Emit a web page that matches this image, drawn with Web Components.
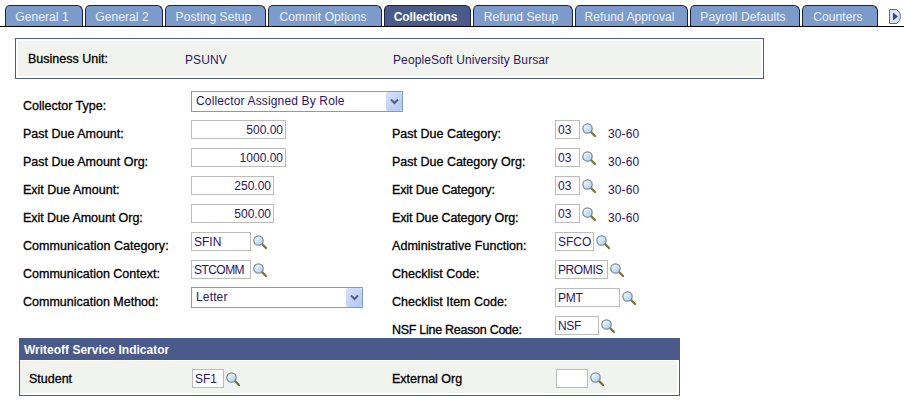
<!DOCTYPE html>
<html>
<head>
<meta charset="utf-8">
<title>Collections</title>
<style>
    html, body { margin: 0; background: #fff; }
    body { font: 12px/14px "Liberation Sans", Arial, sans-serif; color: #000; }
</style>
</head>
<body>
<x-page>
    <x-tabbar>
        <x-tab style="--w:78px">General 1</x-tab>
        <x-tab style="--w:78px">General 2</x-tab>
        <x-tab style="--w:101px">Posting Setup</x-tab>
        <x-tab style="--w:114px">Commit Options</x-tab>
        <x-tab style="--w:87px" active>Collections</x-tab>
        <x-tab style="--w:100px">Refund Setup</x-tab>
        <x-tab style="--w:113px">Refund Approval</x-tab>
        <x-tab style="--w:110px">Payroll Defaults</x-tab>
        <x-tab style="--w:76px">Counters</x-tab>
    </x-tabbar>

    <x-unit-box>
        <span slot="label">Business Unit:</span>
        <span slot="code">PSUNV</span>
        <span slot="name">PeopleSoft University Bursar</span>
    </x-unit-box>

    <x-form>
        <x-field side="left" top="8"><span slot="label">Collector Type:</span><x-select style="--w:212px">Collector Assigned By Role</x-select></x-field>
        <span></span>

        <x-field side="left"><span slot="label">Past Due Amount:</span><x-input style="--w:95px" right>500.00</x-input></x-field>
        <x-field><span slot="label">Past Due Category:</span><x-input style="--w:25px">03</x-input><x-lookup></x-lookup><x-desc>30-60</x-desc></x-field>

        <x-field side="left"><span slot="label">Past Due Amount Org:</span><x-input style="--w:95px" right>1000.00</x-input></x-field>
        <x-field><span slot="label">Past Due Category Org:</span><x-input style="--w:25px">03</x-input><x-lookup></x-lookup><x-desc>30-60</x-desc></x-field>

        <x-field side="left"><span slot="label">Exit Due Amount:</span><x-input style="--w:83px" right>250.00</x-input></x-field>
        <x-field><span slot="label" style="letter-spacing:-.12px">Exit Due Category:</span><x-input style="--w:25px">03</x-input><x-lookup></x-lookup><x-desc>30-60</x-desc></x-field>

        <x-field side="left"><span slot="label" style="letter-spacing:-.06px">Exit Due Amount Org:</span><x-input style="--w:83px" right>500.00</x-input></x-field>
        <x-field><span slot="label" style="letter-spacing:-.13px">Exit Due Category Org:</span><x-input style="--w:25px">03</x-input><x-lookup></x-lookup><x-desc>30-60</x-desc></x-field>

        <x-field side="left"><span slot="label" style="letter-spacing:.05px">Communication Category:</span><x-input style="--w:60px">SFIN</x-input><x-lookup></x-lookup></x-field>
        <x-field><span slot="label" style="letter-spacing:.05px">Administrative Function:</span><x-input style="--w:39px">SFCO</x-input><x-lookup></x-lookup></x-field>

        <x-field side="left"><span slot="label">Communication Context:</span><x-input style="--w:60px;letter-spacing:-.55px">STCOMM</x-input><x-lookup></x-lookup></x-field>
        <x-field><span slot="label">Checklist Code:</span><x-input style="--w:53px;letter-spacing:-.4px">PROMIS</x-input><x-lookup></x-lookup></x-field>

        <x-field side="left" top="8" style="margin-top:-1px"><span slot="label">Communication Method:</span><x-select style="--w:172px">Letter</x-select></x-field>
        <x-field><span slot="label">Checklist Item Code:</span><x-input style="--w:65px;letter-spacing:-.3px">PMT</x-input><x-lookup></x-lookup></x-field>

        <span></span>
        <x-field><span slot="label" style="letter-spacing:-.28px">NSF Line Reason Code:</span><x-input style="--w:44px;letter-spacing:-.3px">NSF</x-input><x-lookup></x-lookup></x-field>
    </x-form>

    <x-section heading="Writeoff Service Indicator">
        <x-field side="student" top="3"><span slot="label">Student</span><x-input style="--w:32px">SF1</x-input><x-lookup></x-lookup></x-field>
        <x-field side="org" top="3"><span slot="label">External Org</span><x-input style="--w:32px"></x-input><x-lookup></x-lookup></x-field>
    </x-section>
</x-page>

<script>
class XPage extends HTMLElement {
    constructor() {
        super();
        this.attachShadow({ mode: 'open' });
        this.shadowRoot.innerHTML = `
            <style>
                :host { display: block; width: 904px; height: 404px; overflow: hidden; padding-top: 5px; box-sizing: border-box; }
            </style>
            <slot></slot>
        `;
    }
}

class XTabbar extends HTMLElement {
    constructor() {
        super();
        this.attachShadow({ mode: 'open' });
        this.shadowRoot.innerHTML = `
            <style>
                :host { display: flex; gap: 2px; height: 21px; padding-left: 5px; border-bottom: 1px solid #000; }
                .more { margin-left: 9px; margin-top: 4px; }
            </style>
            <slot></slot>
            <svg class="more" width="12" height="15" viewBox="0 0 12 15">
                <path d="M.5.5H7.500Q11.500 2.500 11.500 7.500T7.500 14.500H.5Z" fill="#dbe4f7" stroke="#5a6a9a"/>
                <path d="M4 3.500L9 7.500L4 11.500Z" fill="#37477c"/>
            </svg>
        `;
    }
}

class XTab extends HTMLElement {
    constructor() {
        super();
        this.attachShadow({ mode: 'open' });
        this.shadowRoot.innerHTML = `
            <style>
                :host { display: block; width: var(--w); height: 21px; box-sizing: border-box; border: 1px solid #1c2536; border-bottom: 0; border-radius: 5px 6px 0 0; padding-right: 4px;
                    background: #7c9bcb; color: #edf2fb; text-align: center; line-height: 23px; letter-spacing: .08px; white-space: nowrap; }
                :host([active]) { background: #4a5a8a; color: #fff; font-weight: bold; letter-spacing: -.1px; }
            </style>
            <slot></slot>
        `;
    }
}

class XUnitBox extends HTMLElement {
    constructor() {
        super();
        this.attachShadow({ mode: 'open' });
        this.shadowRoot.innerHTML = `
            <style>
                :host { display: block; width: 749px; height: 41px; margin: 11px 0 0 15px; box-sizing: border-box; border: 1px solid #4a5a8a; padding: 2px; background: #fff; }
                .fill { display: grid; grid-template-columns: 157px 208px 1fr; height: 100%; padding: 11px 0 0 10px; box-sizing: border-box; background: #f1f4ee; }
                .label { font-size: 12.5px; -webkit-text-stroke: .3px #000; }
                .value { color: #2c1466; padding-top: 1px; letter-spacing: .1px; }
            </style>
            <div class="fill">
                <div class="label"><slot name="label"></slot></div>
                <div class="value"><slot name="code"></slot></div>
                <div class="value"><slot name="name"></slot></div>
            </div>
        `;
    }
}

class XForm extends HTMLElement {
    constructor() {
        super();
        this.attachShadow({ mode: 'open' });
        this.shadowRoot.innerHTML = `
            <style>
                :host { display: grid; grid-template-columns: 369px 1fr; grid-template-rows: 29px repeat(7, 28px) 22px; margin-top: 12px; padding-left: 23px; }
            </style>
            <slot></slot>
        `;
    }
}

class XField extends HTMLElement {
    constructor() {
        super();
        this.attachShadow({ mode: 'open' });
        this.shadowRoot.innerHTML = `
            <style>
                :host { display: grid; grid-template-columns: 163px auto; align-items: start; justify-content: start; }
                :host([side="left"]) { grid-template-columns: 168px auto; }
                :host([side="org"]) { grid-template-columns: 164px auto; }
                .label { padding-top: var(--label-top, 7px); font-size: 12.5px; -webkit-text-stroke: .3px #000; white-space: nowrap; }
                .control { display: flex; align-items: flex-start; }
            </style>
            <div class="label"><slot name="label"></slot></div>
            <div class="control"><slot></slot></div>
        `;
    }
    connectedCallback() {
        if (this.hasAttribute('top')) this.style.setProperty('--label-top', this.getAttribute('top') + 'px');
    }
}

class XInput extends HTMLElement {
    constructor() {
        super();
        this.attachShadow({ mode: 'open' });
        this.shadowRoot.innerHTML = `
            <style>
                :host { display: block; width: var(--w); height: 19px; box-sizing: border-box; border: 1px solid #bcbcbc; padding: 0 2px; background: #fff;
                    color: #2c1466; line-height: 18px; white-space: nowrap; overflow: hidden; }
                :host([right]) { text-align: right; }
            </style>
            <slot></slot>
        `;
    }
}

class XSelect extends HTMLElement {
    constructor() {
        super();
        this.attachShadow({ mode: 'open' });
        this.shadowRoot.innerHTML = `
            <style>
                :host { display: flex; width: var(--w); height: 21px; box-sizing: border-box; border: 1px solid #7f9db9; background: #fff; color: #2c1466; line-height: 19px; letter-spacing: .15px; }
                .text { flex: 1; padding-left: 4px; white-space: nowrap; }
                .arrow { width: 16px; height: 19px; border-radius: 2px; background: linear-gradient(135deg, #d5e0fb, #b5c8f4); display: flex; align-items: center; justify-content: center; }
            </style>
            <div class="text"><slot></slot></div>
            <div class="arrow">
                <svg width="9" height="7" viewBox="0 0 9 7"><path d="M1 1.500L4.500 5L8 1.500" fill="none" stroke="#4d6185" stroke-width="2"/></svg>
            </div>
        `;
    }
}

class XLookup extends HTMLElement {
    constructor() {
        super();
        this.attachShadow({ mode: 'open' });
        this.shadowRoot.innerHTML = `
            <style>
                :host { display: block; width: 14px; height: 14px; margin: 3px 0 0 2px; }
                svg { display: block; }
            </style>
            <svg width="14" height="14" viewBox="0 0 14 14">
                <defs>
                    <linearGradient id="lens" x1="0" y1="0" x2="1" y2="1">
                        <stop offset="0" stop-color="#ffffff"/>
                        <stop offset="1" stop-color="#a3c9ef"/>
                    </linearGradient>
                </defs>
                <path d="M8.500 8.500L13 13" stroke="#7a7636" stroke-width="2.400" stroke-linecap="round"/>
                <circle cx="5.500" cy="5.500" r="4.700" fill="url(#lens)" stroke="#7d8c98" stroke-width="1.200"/>
            </svg>
        `;
    }
}

class XDesc extends HTMLElement {
    constructor() {
        super();
        this.attachShadow({ mode: 'open' });
        this.shadowRoot.innerHTML = `
            <style>
                :host { display: block; margin-left: 12px; padding-top: 7px; color: #2c1466; letter-spacing: .1px; }
            </style>
            <slot></slot>
        `;
    }
}

class XSection extends HTMLElement {
    constructor() {
        super();
        this.attachShadow({ mode: 'open' });
        this.shadowRoot.innerHTML = `
            <style>
                :host { display: block; width: 661px; height: 58px; margin-left: 19px; box-sizing: border-box; border: 1px solid #4a5a8a; background: #fff; }
                .head { height: 21px; background: #4a5a8a; color: #fff; font-weight: bold; line-height: 22px; padding-left: 4px; }
                .body { display: grid; grid-template-columns: 363px 1fr; height: 32px; margin: 1px 2px 0 0; padding: 8px 0 0 9px; box-sizing: border-box; background: #f1f4ee; }
            </style>
            <div class="head">${this.getAttribute('heading')}</div>
            <div class="body"><slot></slot></div>
        `;
    }
}

customElements.define('x-page', XPage);
customElements.define('x-tabbar', XTabbar);
customElements.define('x-tab', XTab);
customElements.define('x-unit-box', XUnitBox);
customElements.define('x-form', XForm);
customElements.define('x-field', XField);
customElements.define('x-input', XInput);
customElements.define('x-select', XSelect);
customElements.define('x-lookup', XLookup);
customElements.define('x-desc', XDesc);
customElements.define('x-section', XSection);
</script>
</body>
</html>
